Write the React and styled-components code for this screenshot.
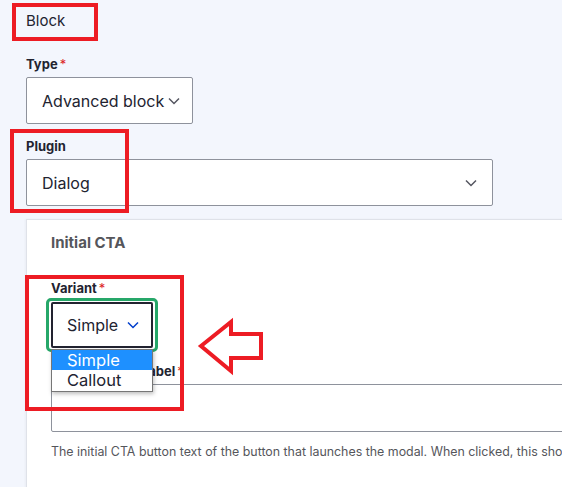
import React from "react";
import styled, { createGlobalStyle } from "styled-components";

const Global = createGlobalStyle`
  html, body { margin: 0; padding: 0; background: #f3f6fd; overflow: hidden; }
  body { font-family: Inter, "Noto Sans", Arial, sans-serif; color: #222330; }
`;

const Page = styled.div`
  position: relative;
  width: 562px;
  height: 487px;
  padding: 11px 0 0 26px;
  box-sizing: border-box;
  overflow: hidden;
`;

const SectionTitle = styled.div`
  font-size: 15px;
  line-height: 20px;
  color: #222330;
  margin-bottom: 24px;
`;

const Field = styled.div`
  display: flex;
  flex-direction: column;
  align-items: flex-start;
  margin-bottom: ${(p) => p.$mb || 0}px;
`;

const Label = styled.label`
  font-size: 13px;
  line-height: 18px;
  font-weight: 700;
  color: #222330;
  margin-bottom: ${(p) => (p.$mb !== undefined ? p.$mb : 4)}px;
  white-space: nowrap;
`;

const Required = styled.span`
  color: #dc2323;
  margin-left: 2px;
  font-weight: 400;
`;

const Select = styled.div`
  box-sizing: border-box;
  height: 47px;
  width: ${(p) => p.$w}px;
  background: #fff;
  border: 1px solid #8e929c;
  border-radius: 2px;
  display: flex;
  align-items: center;
  justify-content: space-between;
  gap: 4px;
  padding: 0 ${(p) => p.$pr}px 0 15px;
  font-size: 16px;
  color: #222330;
  white-space: nowrap;
`;

const FocusRing = styled.div`
  position: relative;
  margin-left: -5px;
  border: 3px solid #26a769;
  border-radius: 5px;
  padding: 1px 2px;
`;

const VariantSelect = styled.div`
  box-sizing: border-box;
  width: 102px;
  height: 46px;
  background: #fff;
  border: 2px solid #222330;
  border-radius: 2px;
  display: flex;
  align-items: center;
  gap: 9px;
  padding-left: 14px;
  font-size: 16px;
  color: #222330;
`;

const Card = styled.div`
  width: 620px;
  background: #fff;
  border-top: 1px solid #dfe2e9;
  border-left: 1px solid #dfe2e9;
  box-shadow: -1px 0 2px rgba(0, 0, 0, 0.04);
  padding: 13px 0 40px 24px;
  box-sizing: border-box;
  height: 300px;
`;

const CardTitle = styled.div`
  font-size: 15px;
  line-height: 20px;
  font-weight: 700;
  color: #55565b;
  margin-bottom: 26px;
`;

const TextInput = styled.div`
  box-sizing: border-box;
  width: 560px;
  height: 48px;
  border: 1px solid #8e929c;
  border-radius: 2px;
  background: #fff;
`;

const Help = styled.div`
  margin-top: 11px;
  font-size: 12.4px;
  line-height: 17px;
  color: #55565b;
  white-space: nowrap;
`;

const Options = styled.ul`
  position: absolute;
  left: 2px;
  top: 48px;
  width: 102px;
  box-sizing: border-box;
  margin: 0;
  padding: 0 0 1px;
  list-style: none;
  background: #fff;
  border: 1px solid #767676;
  box-shadow: 1px 2px 4px rgba(0, 0, 0, 0.25);
  z-index: 2;
`;

const Option = styled.li`
  height: 20px;
  line-height: 20px;
  padding-left: 15px;
  font-size: 16.5px;
  color: ${(p) => (p.$active ? "#fff" : "#222330")};
  background: ${(p) => (p.$active ? "#1e90ff" : "transparent")};
`;

const Mark = styled.div`
  position: absolute;
  left: ${(p) => p.$x}px;
  top: ${(p) => p.$y}px;
  width: ${(p) => p.$w}px;
  height: ${(p) => p.$h}px;
  box-sizing: border-box;
  border: 4px solid #ed1c24;
  z-index: 5;
  pointer-events: none;
`;

const ArrowSvg = styled.svg`
  position: absolute;
  left: 196px;
  top: 316px;
  z-index: 5;
`;

const Chevron = ({ color = "#545560" }) => (
  <svg width="12" height="8" viewBox="0 0 12 8" fill="none" style={{ flexShrink: 0 }}>
    <path d="M1 1.5 L6 6.5 L11 1.5" stroke={color} strokeWidth="1.5" />
  </svg>
);

export default function App() {
  return (
    <>
      <Global />
      <Page>
        <SectionTitle>Block</SectionTitle>

        <Field $mb={13}>
          <Label>
            Type<Required>*</Required>
          </Label>
          <Select $w={167} $pr={16}>
            <span>Advanced block</span>
            <Chevron />
          </Select>
        </Field>

        <Field $mb={13}>
          <Label>Plugin</Label>
          <Select $w={467} $pr={15}>
            <span>Dialog</span>
            <Chevron />
          </Select>
        </Field>

        <Card>
          <CardTitle>Initial CTA</CardTitle>
          <Field $mb={10}>
            <Label $mb={1}>
              Variant<Required>*</Required>
            </Label>
            <FocusRing>
              <VariantSelect>
                <span>Simple</span>
                <Chevron color="#003ecc" />
              </VariantSelect>
              <Options>
                <Option $active>Simple</Option>
                <Option>Callout</Option>
              </Options>
            </FocusRing>
          </Field>
          <Field>
            <Label $mb={4}>
              Trigger button label<Required>*</Required>
            </Label>
            <TextInput />
          </Field>
          <Help>
            The initial CTA button text of the button that launches the modal. When clicked, this should open the dialog.
          </Help>
        </Card>

        <Mark $x={12} $y={3} $w={86} $h={38} />
        <Mark $x={10} $y={129} $w={119} $h={84} />
        <Mark $x={25} $y={275} $w={159} $h={136} />
        <ArrowSvg width="70" height="62" viewBox="0 0 70 62">
          <polygon
            points="5,30 35,6 35,18 65,18 65,42 35,42 35,55"
            fill="none"
            stroke="#ed1c24"
            strokeWidth="4"
            strokeLinejoin="miter"
          />
        </ArrowSvg>
      </Page>
    </>
  );
}
